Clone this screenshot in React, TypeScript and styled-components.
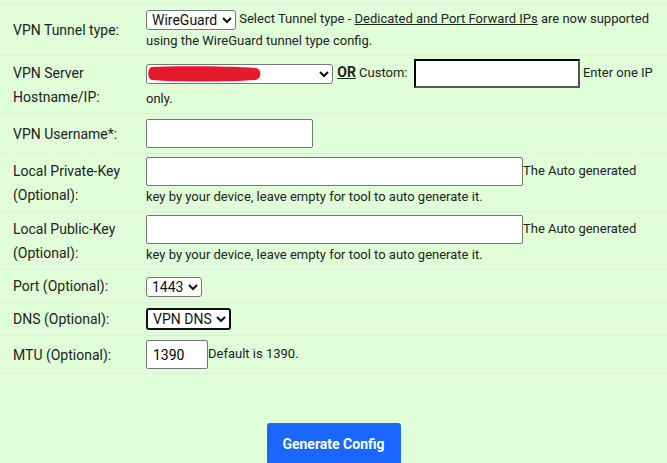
import styled, { createGlobalStyle } from 'styled-components';

const GlobalStyle = createGlobalStyle`
  html, body {
    margin: 0;
    padding: 0;
    background: #e0ffd8;
  }
  body {
    font-family: Roboto, "Liberation Sans", sans-serif;
    font-size: 14px;
    color: #222;
  }
`;

const Page = styled.div`
  padding-top: 4px;
`;

const Form = styled.div`
  display: flex;
  flex-direction: column;
`;

const Row = styled.div<{ $min?: number }>`
  box-sizing: border-box;
  display: grid;
  grid-template-columns: 146px 1fr;
  align-items: center;
  border-top: 1px solid #e4eae2;
  padding: 3px 0;
  min-height: ${(p) => (p.$min ? `${p.$min}px` : 'auto')};
  &:last-child {
    border-bottom: 1px solid #e4eae2;
  }
`;

const Label = styled.div`
  padding-left: 13px;
  line-height: 24px;
`;

const Value = styled.div`
  padding-right: 10px;
  font-size: 13px;
  line-height: 22px;
`;

const Select = styled.select<{ $focus?: boolean }>`
  font-family: inherit;
  font-size: 14px;
  color: #111;
  height: ${(p) => (p.$focus ? '22px' : '20px')};
  padding: 0 1px;
  border: ${(p) => (p.$focus ? '2px solid #111' : '1px solid #767676')};
  border-radius: 3px;
  background: #fff;
  vertical-align: middle;
`;

const Input = styled.input<{ $w: number; $inset?: boolean }>`
  font-family: inherit;
  font-size: 14px;
  width: ${(p) => p.$w}px;
  height: 29px;
  box-sizing: border-box;
  padding: 4px 6px;
  margin-left: ${(p) => (p.$inset ? '3px' : '0')};
  background: #fff;
  border: ${(p) => (p.$inset ? '2px inset #555' : '1px solid #767676')};
  border-radius: ${(p) => (p.$inset ? '0' : '2px')};
  vertical-align: middle;
`;

const Redacted = styled.span`
  position: relative;
  display: inline-block;
  vertical-align: middle;
  line-height: 0;
  svg {
    position: absolute;
    left: 1px;
    top: 2px;
    pointer-events: none;
  }
`;

const Link = styled.a`
  color: #222;
  text-decoration: underline;
`;

const Or = styled.b`
  font-size: 14px;
  margin-left: 1px;
  text-decoration: underline;
`;

const Footer = styled.div`
  display: flex;
  justify-content: center;
  padding-top: 49px;
`;

const Button = styled.button`
  background: #1a66ff;
  color: #fff;
  font-family: inherit;
  font-weight: bold;
  font-size: 14px;
  border: none;
  border-radius: 3px;
  width: 134px;
  height: 42px;
`;

const App = () => {
  return (
    <Page>
      <GlobalStyle />
      <Form>
        <Row $min={51}>
          <Label>VPN Tunnel type:</Label>
          <Value>
            <Select defaultValue="wg">
              <option value="wg">WireGuard</option>
              <option value="ovpn">OpenVPN</option>
            </Select>{' '}
            Select Tunnel type - <Link>Dedicated and Port Forward IPs</Link> are now supported
            using the WireGuard tunnel type config.
          </Value>
        </Row>
        <Row $min={57}>
          <Label>
            VPN Server
            <br />
            Hostname/IP:
          </Label>
          <Value>
            <Redacted>
              <Select style={{ width: 187 }}>
                <option> </option>
              </Select>
              <svg width="116" height="16" viewBox="0 0 116 16">
                <path
                  d="M5 1 C 30 0, 80 0, 109 2 C 115 3, 115 13, 108 14 C 80 16, 30 16, 5 14 C 0 13, 0 2, 5 1 Z"
                  fill="#e5192c"
                />
              </svg>
            </Redacted>{' '}
            <Or>OR</Or> Custom: <Input $w={166} $inset /> Enter one IP only.
          </Value>
        </Row>
        <Row $min={40}>
          <Label>VPN Username*:</Label>
          <Value>
            <Input $w={167} />
          </Value>
        </Row>
        <Row $min={57}>
          <Label>
            Local Private-Key
            <br />
            (Optional):
          </Label>
          <Value>
            <Input $w={377} />
            The Auto generated key by your device, leave empty for tool to auto generate it.
          </Value>
        </Row>
        <Row $min={56}>
          <Label>
            Local Public-Key
            <br />
            (Optional):
          </Label>
          <Value>
            <Input $w={377} />
            The Auto generated key by your device, leave empty for tool to auto generate it.
          </Value>
        </Row>
        <Row $min={33}>
          <Label>Port (Optional):</Label>
          <Value>
            <Select defaultValue="1443">
              <option>1443</option>
              <option>1194</option>
            </Select>
          </Value>
        </Row>
        <Row $min={33}>
          <Label>DNS (Optional):</Label>
          <Value>
            <Select $focus defaultValue="vpn">
              <option value="vpn">VPN DNS</option>
              <option value="custom">Custom</option>
            </Select>
          </Value>
        </Row>
        <Row $min={39}>
          <Label>MTU (Optional):</Label>
          <Value>
            <Input $w={62} defaultValue="1390" />
            Default is 1390.
          </Value>
        </Row>
      </Form>
      <Footer>
        <Button>Generate Config</Button>
      </Footer>
    </Page>
  );
};

export default App;
